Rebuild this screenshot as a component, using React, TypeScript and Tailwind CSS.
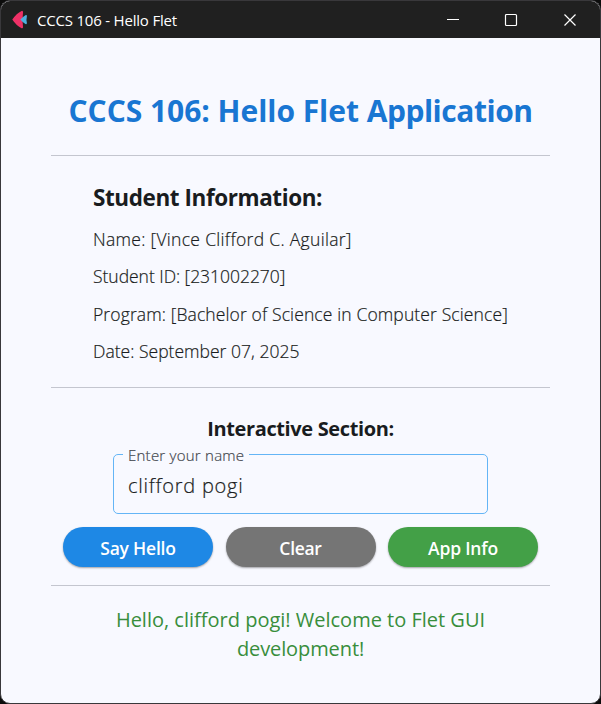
import React from "react";

const infoLines = [
  { text: "Name: [Vince Clifford C. Aguilar]", spacing: "tracking-[0.31px]" },
  { text: "Student ID: [231002270]", spacing: "tracking-[-0.03px]" },
  { text: "Program: [Bachelor of Science in Computer Science]", spacing: "tracking-[0.12px]" },
  { text: "Date: September 07, 2025", spacing: "tracking-[0.02px]" },
];

const buttons = [
  { text: "Say Hello", color: "bg-[#1e88e5]", spacing: "tracking-[-0.2px]" },
  { text: "Clear", color: "bg-[#757575]", spacing: "tracking-[-0.3px]" },
  { text: "App Info", color: "bg-[#43a047]", spacing: "tracking-[-0.2px]" },
];

function TitleBar() {
  return (
    <header className="flex h-[37px] shrink-0 items-center bg-[#202020] pl-[11px] text-white">
      <svg width="16" height="20" viewBox="0 0 16 20" className="mr-[9px] shrink-0">
        <path d="M0.3 9.6 Q4.5 3.2 9.6 0.9 Q11.2 0.5 11 2.4 Q10 9.6 11 16.8 Q11.2 18.7 9.6 18.3 Q4.5 16 0.3 9.6 Z" fill="#ee3167" />
        <path d="M8.4 9.6 Q10.5 6.8 13.4 5.2 Q15 4.6 14.9 6.2 Q14.1 9.6 14.9 13 Q15 14.6 13.4 14 Q10.5 12.4 8.4 9.6 Z" fill="#4fb0e0" />
      </svg>
      <span className="text-[15px] leading-5 tracking-[-0.2px]">CCCS 106 - Hello Flet</span>
      <svg width="132" height="14" viewBox="0 0 132 14" className="ml-auto mr-[22px]" fill="none" stroke="#fff">
        <path d="M1 6.5 H13" />
        <rect x="59.5" y="1.5" width="11" height="11" rx="1" strokeWidth="1.2" />
        <path d="M118.5 1.5 L129.5 12.5 M129.5 1.5 L118.5 12.5" strokeWidth="1.2" />
      </svg>
    </header>
  );
}

function Divider() {
  return <div className="h-px w-[499px] shrink-0 bg-[#c4c6cf]" />;
}

export default function App() {
  return (
    <div className="h-[704px] w-[601px] overflow-hidden bg-[#0c0c0c] font-['Open_Sans','Noto_Sans',sans-serif]">
      <div className="flex h-full flex-col overflow-hidden rounded-[10px] border border-[#39383b] bg-[#f8f9ff] text-[#191c20]">
        <TitleBar />
        <main className="flex flex-1 flex-col items-center">
          <h1 className="mt-[53px] h-10 whitespace-nowrap text-[30px] font-bold leading-10 tracking-[-0.04px] text-[#1976d2]">
            CCCS 106: Hello Flet <span className="tracking-[-0.47px]">Application</span>
          </h1>
          <div className="h-[24px]" />
          <Divider />
          <section className="flex w-[415px] flex-col whitespace-nowrap pt-[27px]">
            <h2 className="h-[30px] text-[22.5px] font-bold leading-[30px] tracking-[-0.42px]">Student Information:</h2>
            <div className="mt-[14px] flex flex-col gap-[12.4px]">
              {infoLines.map((line) => (
                <p
                  key={line.text}
                  className={`h-[25px] text-[17.5px] font-light leading-[25px] [-webkit-text-stroke:0.2px_#191c20] ${line.spacing}`}
                >
                  {line.text}
                </p>
              ))}
            </div>
          </section>
          <div className="h-[22.8px]" />
          <Divider />
          <h3 className="mt-[27px] h-[27px] whitespace-nowrap text-[20px] font-bold leading-[27px] tracking-[-0.37px]">
            Interactive Section:
          </h3>
          <fieldset className="mt-[3px] h-[69px] w-[375px] rounded-[5px] border border-[#64b5f6] pl-[9px]">
            <legend className="h-[20px] px-[5px] text-[15px] font-light leading-[20px] tracking-[0.24px] text-[#43474e] [-webkit-text-stroke:0.2px_#43474e]">
              Enter your name
            </legend>
            <div className="mt-[7px] pl-[5px] text-[20px] font-light leading-[28px] tracking-[0.75px] [-webkit-text-stroke:0.2px_#191c20]">
              clifford pogi
            </div>
          </fieldset>
          <div className="mt-[13px] flex gap-[12.5px]">
            {buttons.map((button) => (
              <button
                key={button.text}
                className={`h-10 w-[150px] rounded-full pt-0.5 text-[17.5px] font-semibold text-white shadow-[0_1px_2px_rgba(0,0,0,0.35)] ${button.color} ${button.spacing}`}
              >
                {button.text}
              </button>
            ))}
          </div>
          <div className="h-[18px]" />
          <Divider />
          <p className="mt-[19px] whitespace-nowrap text-center text-[20px] leading-[29px] text-[#388e3c]">
            Hello, clifford pogi! Welcome to Flet GUI
            <br />
            <span className="tracking-[-0.1px]">development!</span>
          </p>
        </main>
      </div>
    </div>
  );
}
